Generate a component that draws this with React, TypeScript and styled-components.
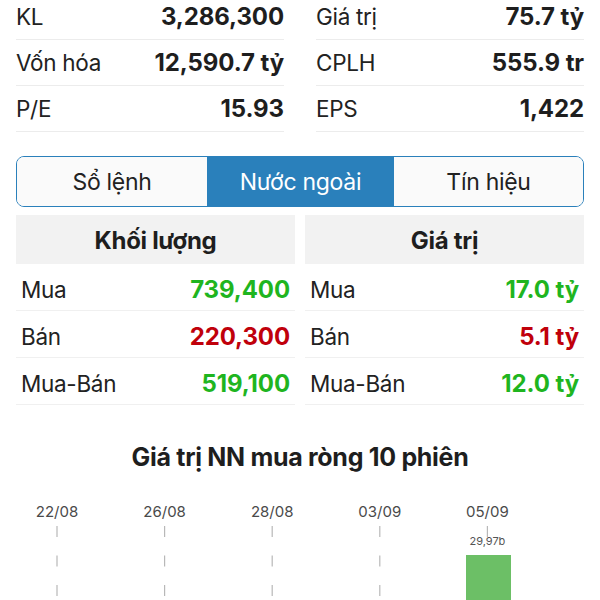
import React from "react";
import styled, { createGlobalStyle } from "styled-components";

const GlobalStyle = createGlobalStyle`
  html, body { margin: 0; padding: 0; background: #ffffff; }
  body { font-family: Inter, "Noto Sans", sans-serif; color: #222; overflow: hidden; }
`;

const Page = styled.div`
  width: 600px;
  height: 600px;
  overflow: hidden;
  display: flex;
  flex-direction: column;
`;

const Content = styled.div`
  padding: 0 16px;
  display: flex;
  flex-direction: column;
`;

const StatsGrid = styled.div`
  display: grid;
  grid-template-columns: 1fr 1fr;
  column-gap: 32px;
  margin-top: -6px;
`;

const StatRow = styled.div`
  height: 46px;
  box-sizing: border-box;
  display: flex;
  align-items: center;
  justify-content: space-between;
  border-bottom: 1px solid #ececec;
`;

const Label = styled.span`
  font-size: 22.5px;
  font-weight: 400;
  color: #222;
  letter-spacing: -0.3px;
`;

const Value = styled.span<{ $tone?: "up" | "down" }>`
  font-size: 24px;
  font-weight: 700;
  letter-spacing: -0.1px;
  color: ${(p) => (p.$tone === "up" ? "#1fb51f" : p.$tone === "down" ? "#c0000b" : "#1e1e1e")};
`;

const Segmented = styled.div`
  margin-top: 24px;
  height: 51px;
  box-sizing: border-box;
  border: 1.5px solid #2a80bb;
  border-radius: 8px;
  overflow: hidden;
  display: grid;
  grid-template-columns: 190px 187px 1fr;
`;

const Segment = styled.div<{ $active?: boolean }>`
  display: flex;
  align-items: center;
  justify-content: center;
  font-size: 23px;
  letter-spacing: -0.3px;
  background: ${(p) => (p.$active ? "#2a80bb" : "#fafafa")};
  color: ${(p) => (p.$active ? "#ffffff" : "#222")};
`;

const Tables = styled.div`
  margin-top: 8px;
  display: grid;
  grid-template-columns: 279px 1fr;
  column-gap: 10px;
`;

const Table = styled.div`
  display: flex;
  flex-direction: column;
`;

const TableHead = styled.div`
  height: 49px;
  padding-top: 2px;
  box-sizing: border-box;
  background: #f2f2f2;
  display: flex;
  align-items: center;
  justify-content: center;
  font-size: 24px;
  font-weight: 700;
  color: #1e1e1e;
  letter-spacing: -0.3px;
`;

const DataRow = styled(StatRow)`
  height: 47px;
  padding: 4px 5px 0;
  border-bottom-color: #f0f0f0;
`;

const ChartTitle = styled.div`
  margin-top: 37px;
  text-align: center;
  font-size: 25px;
  font-weight: 700;
  color: #1e1e1e;
  letter-spacing: -0.3px;
`;

const ChartBox = styled.div`
  margin-top: 24px;
  height: 120px;
`;

const stats: [string, string][][] = [
  [
    ["KL", "3,286,300"],
    ["Vốn hóa", "12,590.7 tỷ"],
    ["P/E", "15.93"],
  ],
  [
    ["Giá trị", "75.7 tỷ"],
    ["CPLH", "555.9 tr"],
    ["EPS", "1,422"],
  ],
];

type Tone = "up" | "down";
const tables: { title: string; rows: [string, string, Tone][] }[] = [
  {
    title: "Khối lượng",
    rows: [
      ["Mua", "739,400", "up"],
      ["Bán", "220,300", "down"],
      ["Mua-Bán", "519,100", "up"],
    ],
  },
  {
    title: "Giá trị",
    rows: [
      ["Mua", "17.0 tỷ", "up"],
      ["Bán", "5.1 tỷ", "down"],
      ["Mua-Bán", "12.0 tỷ", "up"],
    ],
  },
];

const dates = ["22/08", "26/08", "28/08", "03/09", "05/09"];

function Chart() {
  const top = 498;
  const xs = dates.map((_, i) => 57 + i * 107.6);
  return (
    <svg width="600" height="120" viewBox={`0 ${top} 600 120`} style={{ display: "block" }}>
      {dates.map((d, i) => (
        <g key={d}>
          <text
            x={xs[i]}
            y={519}
            textAnchor="middle"
            fontSize="15"
            fill="#4a4a4a"
            fontFamily="Inter, sans-serif"
          >
            {d}
          </text>
          <line
            x1={xs[i]}
            x2={xs[i]}
            y1={528}
            y2={620}
            stroke="#b8b8b8"
            strokeWidth="1.2"
            strokeDasharray="11 18.5"
          />
        </g>
      ))}
      <rect x={xs[4] - 21} y={539} width={42} height={10} fill="#ffffff" />
      <text x={xs[4]} y={547} textAnchor="middle" fontSize="11" fill="#555" fontFamily="Inter, sans-serif">
        29,97b
      </text>
      <rect x={466} y={557} width={45} height={60} fill="#6cbf66" />
    </svg>
  );
}

export default function App() {
  return (
    <Page>
      <GlobalStyle />
      <Content>
        <StatsGrid>
          {stats.map((col, ci) => (
            <div key={ci}>
              {col.map(([l, v]) => (
                <StatRow key={l}>
                  <Label>{l}</Label>
                  <Value>{v}</Value>
                </StatRow>
              ))}
            </div>
          ))}
        </StatsGrid>
        <Segmented>
          <Segment>Sổ lệnh</Segment>
          <Segment $active>Nước ngoài</Segment>
          <Segment>Tín hiệu</Segment>
        </Segmented>
        <Tables>
          {tables.map((t) => (
            <Table key={t.title}>
              <TableHead>{t.title}</TableHead>
              {t.rows.map(([l, v, tone]) => (
                <DataRow key={l}>
                  <Label>{l}</Label>
                  <Value $tone={tone}>{v}</Value>
                </DataRow>
              ))}
            </Table>
          ))}
        </Tables>
        <ChartTitle>Giá trị NN mua ròng 10 phiên</ChartTitle>
      </Content>
      <ChartBox>
        <Chart />
      </ChartBox>
    </Page>
  );
}
